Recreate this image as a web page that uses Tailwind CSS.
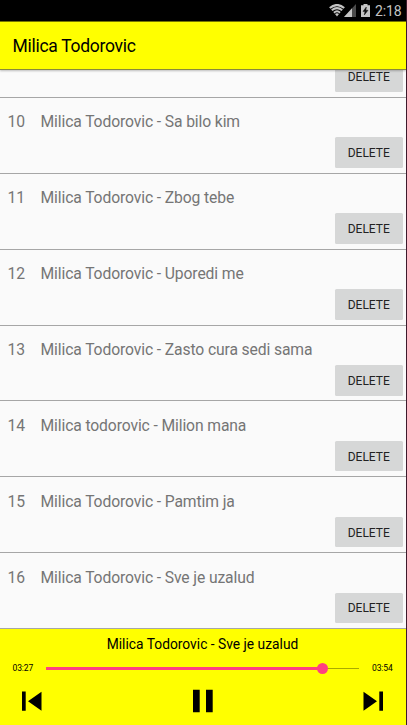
<!DOCTYPE html>
<html lang="en">
<head>
<meta charset="utf-8">
<title>Milica Todorovic</title>
<script src="https://cdn.jsdelivr.net/npm/@tailwindcss/browser@4"></script>
</head>
<body class="bg-[#3d1a2c] font-['Roboto',sans-serif]">
<div class="flex h-[725px] w-[406px] flex-col overflow-hidden bg-[#fafafa]">
  <div class="flex h-[21px] shrink-0 items-center justify-end bg-black pr-[4.500px] text-[#c4c4c4]">
    <svg class="h-[13px] w-[16px]" viewBox="0 0 16 13" fill="none" stroke="#c4c4c4"><path d="M.8 4Q8-1.900 15.200 4" stroke-width="2.200"/><path d="M2.800 6.300Q8 1.900 13.200 6.300" stroke-width="2"/><path d="M4.900 8.700Q8 6 11.100 8.700" stroke-width="1.900"/><path d="M6 10Q8 8.400 10 10L8 12.500Z" fill="#c4c4c4" stroke="none"/></svg>
    <svg class="-ml-px h-[13px] w-[13px]" viewBox="0 0 13 13"><path d="M12 0V13H0Z" fill="#4b4b4b"/><path d="M8 4.300V13H0Z" fill="#c4c4c4"/></svg>
    <svg class="ml-[4px] h-[13px] w-[9px]" viewBox="0 0 9 13"><path d="M2.500 0H6.500V1.200H9V13H0V1.200H2.500Z" fill="#c4c4c4"/><path d="M5.300 3L2 7.400H4L3.300 11L7 6.300H4.900Z" fill="#111" stroke="#111" stroke-width=".5"/></svg>
    <span class="ml-[5px] pt-px text-[14px] leading-[20px] tracking-[-0.1px]">2:18</span>
  </div>
  <header class="z-10 flex h-[49px] shrink-0 items-center border-y border-t-[#777700] border-b-[#8a8a3a] bg-[#ffff00] pt-px pl-[12.500px] text-[17.500px] tracking-[-0.28px] text-black shadow-[0_1px_2px_rgba(0,0,0,0.25)]">Milica Todorovic</header>
  <main id="tracks" class="flex h-[559px] shrink-0 flex-col justify-end overflow-hidden"></main>
  <footer class="flex grow flex-col bg-[#ffff00] text-black">
    <div class="h-[30px] pr-px text-center text-[13.800px] leading-[30px]">Milica Todorovic - Sve je uzalud</div>
    <div class="flex h-[18px] items-center text-[8.500px]">
      <span class="w-[46px] pt-px pl-[12.500px] tracking-[-0.1px]">03:27</span>
      <div class="relative flex h-full w-[313px] items-center">
        <div class="h-[3px] w-[276px] bg-[#ff4081]"></div>
        <div class="h-px grow bg-[#aaaa00]"></div>
        <div class="absolute top-[4px] left-[271px] size-[10.500px] rounded-full bg-[#ff4081]"></div>
      </div>
      <span class="pt-px pl-[13px] tracking-[-0.1px]">03:54</span>
    </div>
    <div class="flex h-[48px] items-center justify-between pr-[23px] pl-[22px]">
      <svg class="h-[20px] w-[20px]" viewBox="0 0 20 20"><path d="M0 .5H3.700V19.700H0ZM19.500.7V19.700L6 10.200Z"/></svg>
      <svg class="h-[24px] w-[20px]" viewBox="0 0 20 24"><path d="M0 .7H6.700V23.300H0ZM13 .7H19.700V23.300H13Z"/></svg>
      <svg class="h-[20px] w-[20px]" viewBox="0 0 20 20"><path d="M16.300.5H20V19.700H16.300ZM.5.7V19.700L14 10.200Z"/></svg>
    </div>
  </footer>
</div>
<script>
const tracks = [
  ['', ''],
  [10, 'Milica Todorovic - Sa bilo kim'],
  [11, 'Milica Todorovic - Zbog tebe'],
  [12, 'Milica Todorovic - Uporedi me'],
  [13, 'Milica Todorovic - Zasto cura sedi sama'],
  [14, 'Milica todorovic - Milion mana'],
  [15, 'Milica Todorovic - Pamtim ja'],
  [16, 'Milica Todorovic - Sve je uzalud'],
];
document.getElementById('tracks').innerHTML = tracks.map(([n, title]) => `
  <div class="flex h-[75.860px] shrink-0 flex-col border-b border-[#a6a6a6] text-[15.700px] tracking-[-0.12px] text-[#757575]">
    <div class="flex h-[39.500px] shrink-0 items-end pl-[7.500px] leading-[30px]"><span class="w-[33px]">${n}</span><span>${title}</span></div>
    <button class="mr-[3.500px] h-[30.500px] w-[67.500px] shrink-0 self-end rounded-[1.500px] bg-[#d6d7d7] pt-px text-[12px] tracking-normal text-[#222]">DELETE</button>
  </div>`).join('');
</script>
</body>
</html>
